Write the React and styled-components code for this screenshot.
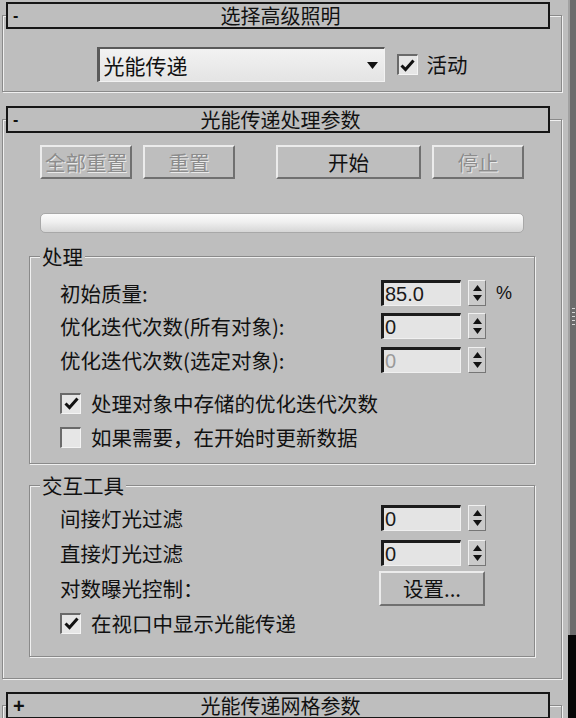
import React from "react";
import styled, { createGlobalStyle } from "styled-components";

const BG = "#bebebe";

const GlobalStyle = createGlobalStyle`
  html, body {
    margin: 0;
    padding: 0;
    background: ${BG};
  }
  body {
    font-family: "Noto Sans CJK SC", "Noto Sans", sans-serif;
    color: #111;
  }
`;

const Screen = styled.div`
  width: 576px;
  height: 718px;
  overflow: hidden;
  display: flex;
  background: ${BG};
`;

const Panel = styled.div`
  width: 568px;
  flex: none;
  display: flex;
  flex-direction: column;
`;

const Scrollbar = styled.div`
  width: 8px;
  flex: none;
  display: flex;
  flex-direction: column;
`;

const Thumb = styled.div`
  height: 635px;
  box-sizing: border-box;
  background: #6c6c6c;
  border-left: 2px solid #a2a2a2;
  display: flex;
  align-items: center;
  justify-content: center;
`;

const Grip = styled.div`
  width: 3px;
  height: 20px;
  background: repeating-linear-gradient(#d6d6d6 0 1px, transparent 1px 4px);
`;

const Track = styled.div`
  flex: 1;
  background: #060606;
`;

const Rollout = styled.section`
  flex: none;
  box-sizing: border-box;
  margin: ${(p) => p.$top}px 6px 0 2px;
  border: 1px solid #8a8a8a;
  box-shadow: 1px 1px 0 #f0f0f0, inset 1px 1px 0 #f0f0f0;
  padding-bottom: ${(p) => p.$bottom || 0}px;
  display: flex;
  flex-direction: column;
`;

const RollHeader = styled.div`
  flex: none;
  box-sizing: border-box;
  height: 27px;
  margin: -14px 11px 0 3px;
  border: 2px solid #161616;
  background: ${BG};
  display: grid;
  grid-template-columns: 24px 1fr 24px;
  align-items: center;
  padding-left: 5px;
  font-size: 20px;
  line-height: 1;
`;

const Sign = styled.span`
  font-family: "Liberation Sans", Arial, sans-serif;
  font-weight: bold;
  font-size: ${(p) => (p.$plus ? 20 : 16)}px;
`;

const HeaderTitle = styled.span`
  text-align: center;
`;

const ChooserRow = styled.div`
  margin-top: 18px;
  display: flex;
  align-items: center;
  justify-content: center;
`;

const Dropdown = styled.div`
  width: 288px;
  height: 35px;
  box-sizing: border-box;
  border-style: solid;
  border-width: 2px 1px 1px 3px;
  border-color: #5a5a5a #f2f2f2 #f2f2f2 #5a5a5a;
  background: linear-gradient(#f2f2f2, #e4e4e4);
  display: flex;
  align-items: center;
  justify-content: space-between;
  padding: 0 6px 0 4px;
  font-size: 21px;
`;

const Check = styled.div`
  width: 21px;
  height: 21px;
  flex: none;
  box-sizing: border-box;
  border-style: solid;
  border-width: 2px 1px 1px 2px;
  border-color: #6a6a6a #f4f4f4 #f4f4f4 #6a6a6a;
  background: #e6e6e6;
  display: flex;
  align-items: center;
  justify-content: center;
  margin-left: ${(p) => p.$ml || 0}px;
`;

const CheckText = styled.span`
  font-size: 20.5px;
  line-height: 1;
  margin-left: ${(p) => p.$ml || 10}px;
`;

const ButtonRow = styled.div`
  margin: 12px 0 0 37px;
  display: flex;
`;

const Btn = styled.button`
  width: ${(p) => p.$w}px;
  height: 34px;
  margin-left: ${(p) => p.$ml || 0}px;
  padding: 0;
  box-sizing: border-box;
  background: ${BG};
  border: 2px solid;
  border-color: #ececec #707070 #707070 #ececec;
  font-family: inherit;
  font-size: 20.5px;
  line-height: 1;
  color: ${(p) => (p.$dim ? "#8c8c8c" : "#111")};
  text-shadow: ${(p) => (p.$dim ? "1px 1px 0 #eaeaea" : "none")};
`;

const Progress = styled.div`
  margin: 34px 37px 0 37px;
  height: 20px;
  box-sizing: border-box;
  border: 1px solid #a8a8a8;
  border-radius: 5px;
  background: linear-gradient(#fbfbfb, #efefef 45%, #d6d6d6);
`;

const Group = styled.div`
  margin: ${(p) => p.$top}px 26px 0 26px;
  border: 1px solid #8a8a8a;
  box-shadow: 1px 1px 0 #f0f0f0, inset 1px 1px 0 #f0f0f0;
  padding: 0 0 ${(p) => p.$bottom}px 30px;
  display: flex;
  flex-direction: column;
`;

const GroupTitle = styled.div`
  align-self: flex-start;
  height: 24px;
  margin: -13px 0 0 -20px;
  padding: 0 2px;
  background: ${BG};
  font-size: 20.5px;
  line-height: 24px;
`;

const Row = styled.div`
  display: flex;
  align-items: center;
  height: ${(p) => p.$h || 26}px;
  margin-top: ${(p) => p.$gap}px;
`;

const Label = styled.span`
  width: 321px;
  flex: none;
  font-size: 20.5px;
  line-height: 1;
`;

const NumField = styled.div`
  width: 80px;
  height: 26px;
  box-sizing: border-box;
  border-style: solid;
  border-width: 3px 1px 1px 3px;
  border-color: #1c1c1c #f0f0f0 #f0f0f0 #1c1c1c;
  background: #e4e4e4;
  display: flex;
  align-items: center;
  padding-left: 1px;
  font-family: "Liberation Sans", Arial, sans-serif;
  font-size: 20px;
  color: ${(p) => (p.$dim ? "#9a9a9a" : "#1a1a1a")};
`;

const Spinner = styled.div`
  width: 18px;
  height: 26px;
  margin-left: 7px;
  box-sizing: border-box;
  border: 1px solid;
  border-color: #f0f0f0 #767676 #767676 #f0f0f0;
  background: #cacaca;
  display: flex;
  flex-direction: column;
  align-items: center;
  justify-content: space-evenly;
`;

const Unit = styled.span`
  margin-left: 10px;
  font-family: "Liberation Sans", Arial, sans-serif;
  font-size: 18px;
`;

const SetupBtn = styled(Btn)`
  height: 35px;
  margin-left: -2px;
`;

const Tri = ({ down }) => (
  <svg width="9" height="6" viewBox="0 0 9 6">
    <path d={down ? "M0 0H9L4.5 6Z" : "M0 6H9L4.5 0Z"} fill="#111" />
  </svg>
);

const Tick = () => (
  <svg width="15" height="13" viewBox="0 0 15 13">
    <path d="M1.5 6.5L5.5 10.5L13.5 1.5" fill="none" stroke="#111" strokeWidth="3" />
  </svg>
);

const SpinField = ({ value, dim, unit }) => (
  <>
    <NumField $dim={dim}>{value}</NumField>
    <Spinner>
      <Tri />
      <Tri down />
    </Spinner>
    {unit && <Unit>{unit}</Unit>}
  </>
);

const CheckRow = ({ checked, text, gap }) => (
  <Row $h={22} $gap={gap}>
    <Check>{checked && <Tick />}</Check>
    <CheckText>{text}</CheckText>
  </Row>
);

export default function App() {
  return (
    <Screen>
      <GlobalStyle />
      <Panel>
        <Rollout $top={15} $bottom={9}>
          <RollHeader>
            <Sign>-</Sign>
            <HeaderTitle>选择高级照明</HeaderTitle>
          </RollHeader>
          <ChooserRow>
            <Dropdown>
              <span>光能传递</span>
              <svg width="11" height="7" viewBox="0 0 11 7">
                <path d="M0 0H11L5.5 7Z" fill="#111" />
              </svg>
            </Dropdown>
            <Check $ml={12}>
              <Tick />
            </Check>
            <CheckText $ml={9}>活动</CheckText>
          </ChooserRow>
        </Rollout>

        <Rollout $top={27} $bottom={21}>
          <RollHeader>
            <Sign>-</Sign>
            <HeaderTitle>光能传递处理参数</HeaderTitle>
          </RollHeader>
          <ButtonRow>
            <Btn $w={92} $dim disabled>全部重置</Btn>
            <Btn $w={92} $ml={11} $dim disabled>重置</Btn>
            <Btn $w={145} $ml={41}>开始</Btn>
            <Btn $w={92} $ml={11} $dim disabled>停止</Btn>
          </ButtonRow>
          <Progress />

          <Group $top={23} $bottom={15}>
            <GroupTitle>处理</GroupTitle>
            <Row $gap={12}>
              <Label>初始质量:</Label>
              <SpinField value="85.0" unit="%" />
            </Row>
            <Row $gap={7}>
              <Label>优化迭代次数(所有对象):</Label>
              <SpinField value="0" />
            </Row>
            <Row $gap={8}>
              <Label>优化迭代次数(选定对象):</Label>
              <SpinField value="0" dim />
            </Row>
            <CheckRow checked gap={19} text="处理对象中存储的优化迭代次数" />
            <CheckRow gap={12} text="如果需要，在开始时更新数据" />
          </Group>

          <Group $top={21} $bottom={22}>
            <GroupTitle>交互工具</GroupTitle>
            <Row $gap={8}>
              <Label>间接灯光过滤</Label>
              <SpinField value="0" />
            </Row>
            <Row $gap={9}>
              <Label>直接灯光过滤</Label>
              <SpinField value="0" />
            </Row>
            <Row $h={35} $gap={5}>
              <Label>对数曝光控制：</Label>
              <SetupBtn $w={106}>设置...</SetupBtn>
            </Row>
            <CheckRow checked gap={6} text="在视口中显示光能传递" />
          </Group>
        </Rollout>

        <Rollout $top={26}>
          <RollHeader>
            <Sign $plus>+</Sign>
            <HeaderTitle>光能传递网格参数</HeaderTitle>
          </RollHeader>
          <ChooserRow />
        </Rollout>
      </Panel>
      <Scrollbar>
        <Thumb>
          <Grip />
        </Thumb>
        <Track />
      </Scrollbar>
    </Screen>
  );
}
